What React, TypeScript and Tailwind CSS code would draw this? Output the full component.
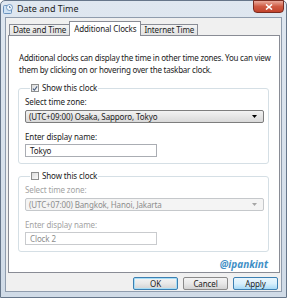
import React from "react";

const font = { fontFamily: '"Noto Sans", "Open Sans", Arial, sans-serif' };

function CheckBox({ checked }: { checked: boolean }) {
  return (
    <span className="inline-flex w-[8px] h-[8px] border border-[#8e8f8f] bg-gradient-to-br from-[#dcdcdc] to-[#fbfbfb] items-center justify-center mr-[3px]">
      {checked && (
        <svg width="7" height="7" viewBox="0 0 7 7">
          <path d="M1 3.6 L2.8 5.5 L6 1" stroke="#4a5f80" strokeWidth="1.3" fill="none" />
        </svg>
      )}
    </span>
  );
}

function Arrow({ color }: { color: string }) {
  return (
    <svg width="5" height="3" viewBox="0 0 5 3">
      <path d="M0 0 L5 0 L2.5 3 Z" fill={color} />
    </svg>
  );
}

function ClockGroup({
  checked,
  zone,
  name,
  disabled,
}: {
  checked: boolean;
  zone: string;
  name: string;
  disabled: boolean;
}) {
  const labelColor = disabled ? "text-[#a3a3a3]" : "text-[#222]";
  return (
    <fieldset className="border border-[#d5dfe5] rounded-[3px] pl-[6px] pr-[4px] pb-[6px] ml-[9px] mr-[11px]">
      <legend className="ml-[5px] px-[1px] flex items-center h-[10px] leading-[10px] text-[#222]">
        <CheckBox checked={checked} />
        <span>Show this clock</span>
      </legend>
      <div className={`mt-[4px] leading-[10px] ${labelColor}`}>Select time zone:</div>
      <div
        className={`mt-[3px] h-[13px] w-[239px] flex items-center justify-between pl-[3px] pr-[6px] rounded-[2px] border ${
          disabled
            ? "border-[#c5c8cb] bg-[#f4f4f4] text-[#8d8d8d]"
            : "border-[#7d7d7d] bg-gradient-to-b from-[#f2f2f2] to-[#d9d9d9] text-[#222]"
        }`}
      >
        <span className="leading-[10px]">{zone}</span>
        <Arrow color={disabled ? "#a6a6a6" : "#000"} />
      </div>
      <div className={`mt-[9px] leading-[10px] ${labelColor}`}>Enter display name:</div>
      <div
        className={`mt-[2px] h-[13px] w-[132px] flex items-center pl-[4px] border bg-white ${
          disabled ? "border-[#c9cbce] text-[#8d8d8d]" : "border-[#aaadb3] text-[#222]"
        }`}
      >
        <span className="leading-[10px]">{name}</span>
      </div>
    </fieldset>
  );
}

function Button({ label, variant }: { label: string; variant: "default" | "normal" | "hover" }) {
  const cls =
    variant === "hover"
      ? "border-[#3c7fb1] bg-gradient-to-b from-[#eaf6fd] via-[#d9f0fc] to-[#a7d9f5]"
      : variant === "default"
      ? "border-[#3c7fb1] bg-gradient-to-b from-[#f4f4f4] via-[#e8e8e8] to-[#d3d3d3] shadow-[inset_0_0_0_1px_#a8def7]"
      : "border-[#8a8a8a] bg-gradient-to-b from-[#f4f4f4] via-[#e8e8e8] to-[#d3d3d3]";
  return (
    <div
      className={`w-[45px] h-[13px] rounded-[2px] border flex items-center justify-center text-[#222] leading-[10px] ${cls}`}
    >
      {label}
    </div>
  );
}

export default function App() {
  return (
    <div className="w-[287px] h-[300px] bg-white text-[8px] tracking-[-0.12px]" style={font}>
      <div className="relative w-[287px] h-[298px] border border-[#66768a] rounded-t-[5px] bg-gradient-to-b from-[#dfe7f0] to-[#d0dbe7] flex flex-col">
        {/* Title bar */}
        <div className="h-[16px] flex items-center pl-[2px]">
          <svg width="10" height="10" viewBox="0 0 10 10" className="mr-[4px]">
            <rect x="0.5" y="1.5" width="8" height="8" rx="1" fill="#cfe3f5" stroke="#6b93bd" />
            <circle cx="6.5" cy="3.5" r="3" fill="#eef6fd" stroke="#5d89b8" strokeWidth="0.8" />
            <path d="M6.5 2 V3.6 H7.8" stroke="#355f8c" strokeWidth="0.7" fill="none" />
          </svg>
          <span className="text-[9px] text-[#1d1d1d] leading-[10px] tracking-normal">Date and Time</span>
        </div>
        <div className="absolute top-[-1px] right-[2px] w-[31px] h-[13px] rounded-b-[4px] border border-[#7a2b20] bg-gradient-to-b from-[#e9a99b] via-[#cf5a43] to-[#c2432c] flex items-center justify-center">
          <svg width="8" height="6" viewBox="0 0 8 6">
            <path d="M1 0.5 L7 5.5 M7 0.5 L1 5.5" stroke="#fff" strokeWidth="1.6" />
          </svg>
        </div>

        {/* Client area */}
        <div className="mx-[4px] mb-[5px] flex-1 bg-[#f0f0f0] border border-[#8f9cad] flex flex-col">
          {/* tabs */}
          <div className="h-[17px] flex items-end pl-[3px]">
            <div className="h-[11px] px-[3px] border-t border-l border-[#898c95] bg-gradient-to-b from-[#f3f3f3] to-[#e3e3e3] leading-[10px] flex items-center text-[#222]">
              Date and Time
            </div>
            <div className="relative z-10 -mb-px h-[15px] px-[4px] border-t border-l border-r border-[#898c95] bg-white leading-[10px] flex items-center text-[#222]">
              Additional Clocks
            </div>
            <div className="h-[11px] px-[3px] border-t border-r border-[#898c95] bg-gradient-to-b from-[#f3f3f3] to-[#e3e3e3] leading-[10px] flex items-center text-[#222]">
              Internet Time
            </div>
          </div>
          {/* panel */}
          <div className="ml-[2px] mr-[1px] h-[238px] bg-white border border-[#898c95] flex flex-col">
            <p className="pt-[16px] pl-[10px] leading-[12px] text-[#222] whitespace-nowrap tracking-[-0.22px]">
              Additional clocks can display the time in other time zones. You can view
              <br />
              them by clicking on or hovering over the taskbar clock.
            </p>
            <div className="mt-[7px]">
              <ClockGroup checked={true} zone="(UTC+09:00) Osaka, Sapporo, Tokyo" name="Tokyo" disabled={false} />
            </div>
            <div className="mt-[7px]">
              <ClockGroup checked={false} zone="(UTC+07:00) Bangkok, Hanoi, Jakarta" name="Clock 2" disabled={true} />
            </div>
            <div className="mt-[6px] pr-[11px] flex justify-end">
              <span className="text-[10px] leading-[12px] font-bold italic text-[#3f8fc6] tracking-normal">@ipankint</span>
            </div>
          </div>
          {/* buttons */}
          <div className="mt-[4px] flex justify-end gap-[5px] pr-[3px]">
            <Button label="OK" variant="default" />
            <Button label="Cancel" variant="normal" />
            <Button label="Apply" variant="hover" />
          </div>
        </div>
      </div>
    </div>
  );
}
